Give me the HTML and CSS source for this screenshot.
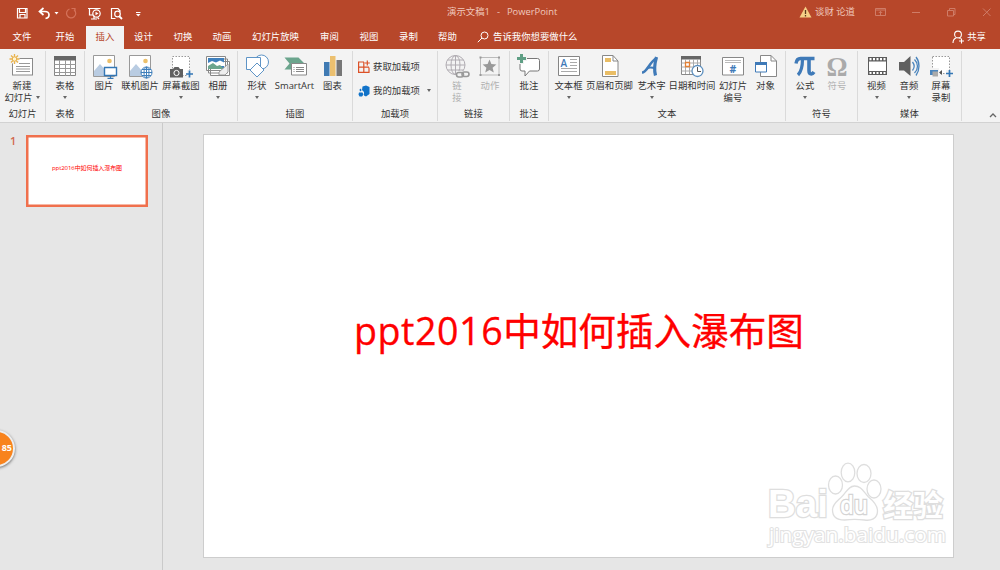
FILE: index.html
```html
<!DOCTYPE html>
<html lang="zh-CN">
<head>
<meta charset="utf-8">
<title>演示文稿1 - PowerPoint</title>
<link rel="stylesheet" href="styles.css">
</head>
<body>
<div class="app">
  <header class="titlebar">
    <svg class="quick" viewBox="0 0 150 24" fill="none" stroke="#fff" stroke-width="1.2">
      <path d="M17.500 7.500h9.500v9.500h-9.500zM19.500 7.500v4h6v-4M20 17v-3.500h5V17"/>
      <path d="M43.500 7l-4 3.500 4 3.500M40 10.500h5c5 0 5.500 6 .5 7" stroke-width="1.700"/>
      <path d="M54.500 11h4l-2 2.500z" fill="#fff" stroke="none"/>
      <path d="M74 8.700a4.600 4.600 0 1 1-4.500-.7M71.500 7.500h3.500v3.500" stroke="#d4725a"/>
      <path d="M88 7.500h12.500M89.500 7.500v6.500h3.500M94 14.500v3.500M91 18h6M97.500 16.500l1.500 1.500"/>
      <circle cx="96.500" cy="12.500" r="3.700"/><path d="M95.500 10.700l3 1.800-3 1.800z" fill="#fff" stroke="none"/>
      <path d="M120.500 10.500L118 7.500h-6.500v10h4"/><circle cx="117.500" cy="13" r="2.800"/><path d="M119 15l3 3" stroke-width="1.800"/>
      <path d="M136 11.500h4.500" stroke-width="1"/><path d="M136 13h4.500l-2.250 2.500z" fill="#fff" stroke="none"/>
    </svg>
    <div class="doc-title"><span>演示文稿1</span><span>-</span><span>PowerPoint</span></div>
    <div class="account">
      <svg width="13" height="12" viewBox="0 0 13 12"><path d="M6.500 .5L12.500 11.500H.5z" fill="#f5cf86"/><path d="M6.500 4v4M6.500 9v1.500" stroke="#5b3a1c" stroke-width="1.300"/></svg>
      <span>谈财 论道</span>
    </div>
    <svg class="window-controls" viewBox="0 0 130 24" fill="none" stroke="#cf7c67">
      <path d="M5.500 8.500h10v7h-10zM5.500 10h10M10.500 15v-3.500M8.800 13l1.700-1.700 1.700 1.700"/>
      <path d="M42 12.500h8M77.500 10.500h6v5.500h-6zM79.500 10.500v-2h5.500v6h-1.500M113 8.500l7.500 7.500M120.500 8.500l-7.500 7.500"/>
    </svg>
  </header>

  <nav class="tabs">
    <span class="tab w-file">文件</span><span class="tab w-home">开始</span><span class="tab active">插入</span><span class="tab">设计</span><span class="tab w-mid">切换</span><span class="tab w-narrow">动画</span><span class="tab w-show">幻灯片放映</span><span class="tab">审阅</span><span class="tab w-mid">视图</span><span class="tab">录制</span><span class="tab">帮助</span>
    <span class="tell-me">
      <svg width="12" height="12" viewBox="0 0 12 12" fill="none" stroke="#fff"><circle cx="7.500" cy="4.500" r="3.500"/><path d="M5 7L.8 11.200"/></svg>
      告诉我你想要做什么
    </span>
    <span class="share">
      <svg width="13" height="14" viewBox="0 0 13 14" fill="none" stroke="#fff" stroke-width="1.100"><circle cx="6" cy="4.500" r="3.400"/><path d="M1 13c0-3 1.500-4.500 3.500-5.200M7.500 7.800l1 1M9.500 8.500v5M7 11h5"/></svg>
      共享
    </span>
  </nav>

  <section class="ribbon">
    <div class="group g-slide">
      <div class="tools">
        <div class="tool"><svg class="icon" viewBox="0 0 28 26"><rect x="4.500" y="5.500" width="20" height="16.500" fill="#fff" stroke="#8a8a8a"/><path d="M11 10.500h11M8 13.500h14M8 16h14M8 18.500h14" stroke="#999"/><circle cx="6.500" cy="6" r="5" fill="#f3f3f3"/><path d="M6.500 1v10M1.500 6h10M3 2.500l7 7M10 2.500l-7 7" stroke="#e9b34d" stroke-width="1.300"/><circle cx="6.500" cy="6" r="2.200" fill="#fff3d0" stroke="#e9b34d"/></svg><span>新建</span><span class="more">幻灯片<i class="arrow"></i></span></div>
      </div>
      <div class="caption">幻灯片</div>
    </div>
    <div class="group g-table">
      <div class="tools">
        <div class="tool"><svg class="icon" viewBox="0 0 28 26"><path d="M3.500 3.500h21v19h-21z" fill="#fff" stroke="#858585"/><path d="M3 3h22v4.500H3z" fill="#666"/><path d="M3.500 11.500h21M3.500 15.500h21M3.500 19.500h21M8.500 7v16M14.500 7v16M19.500 7v16" stroke="#999" fill="none"/></svg><span>表格</span><i class="arrow below"></i></div>
      </div>
      <div class="caption">表格</div>
    </div>
    <div class="group g-image">
      <div class="tools">
        <div class="tool"><svg class="icon" viewBox="0 0 28 26"><path d="M3.500 2.500h21v21h-21z" fill="#fff" stroke="#999"/><path d="M4 18l6-7 7 8v4H4z" fill="#b9cce2"/><circle cx="19.500" cy="8" r="2.300" fill="#ecc06a"/><path d="M14.500 14.500h12v8h-12z" fill="#fff" stroke="#3477b5" stroke-width="1.400"/><path d="M20.500 23v2M17.500 25.300h6" stroke="#3477b5" stroke-width="1.200"/></svg><span>图片</span></div>
        <div class="tool"><svg class="icon" viewBox="0 0 28 26"><path d="M3.500 2.500h21v21h-21z" fill="#fff" stroke="#999"/><path d="M4 18l6-7 7 8v4H4z" fill="#b9cce2"/><circle cx="19.500" cy="8" r="2.300" fill="#ecc06a"/><g fill="#fff" stroke="#3f7fbb"><circle cx="20.500" cy="19.500" r="5.500"/><ellipse cx="20.500" cy="19.500" rx="2.500" ry="5.500"/><path d="M15 19.500h11M16 16.500h9M16 22.500h9M20.500 14v11"/></g></svg><span>联机图片</span></div>
        <div class="tool wide"><svg class="icon" viewBox="0 0 28 26"><path d="M5.500 3.500h17v19h-17z" fill="#fff" stroke="#999" stroke-dasharray="1.500 1.500"/><path d="M3 16h3l1.500-2h4l1.500 2h3v8.500H3z" fill="#606060"/><circle cx="9.500" cy="20" r="2.600" fill="#606060" stroke="#fff"/><path d="M20 17h7v7h-7z" fill="#f3f3f3"/><path d="M22.500 17.500v7M19 21h7" stroke="#3477b5" stroke-width="1.700"/></svg><span>屏幕截图</span><i class="arrow below"></i></div>
        <div class="tool album"><svg class="icon" viewBox="0 0 28 26"><g fill="#fff" stroke="#888"><path d="M6.500 8.500h19v14h-19zM4.500 6h19v14h-19zM2.500 3.500h19v14h-19z"/></g><path d="M4 5h16v11H4z" fill="#3f80bd"/><path d="M4 10l4-2 4 1.500 4-2 4 2V13H4z" fill="#fff"/><path d="M4 16v-3l5-3 4 3 3-1 4 4z" fill="#6ba58d"/><path d="M15 19l9-8v8l-3 3h-6z" fill="#eee" stroke="#888" stroke-width=".8"/></svg><span>相册</span><i class="arrow below"></i></div>
      </div>
      <div class="caption">图像</div>
    </div>
    <div class="group g-illus">
      <div class="tools">
        <div class="tool"><svg class="icon" viewBox="0 0 28 26" fill="#fff" stroke="#5e94c6"><circle cx="18.500" cy="9" r="7"/><path d="M3.500 4.500h14v12h-14z"/><path d="M14 10l7 7-7 7-7-7z"/></svg><span>形状</span><i class="arrow below"></i></div>
        <div class="tool smart"><svg class="icon" viewBox="0 0 28 26"><path d="M3.500 4.500h14l6 6-6 6h-14l5-6z" fill="#6ba58d"/><path d="M10.500 10.500h15v11.500h-15z" fill="#fff" stroke="#888"/><path d="M15 14.500h8M15 16.500h8M15 18.500h8M12.500 14.500h1M12.500 16.500h1M12.500 18.500h1" stroke="#888"/></svg><span>SmartArt</span></div>
        <div class="tool chart"><svg class="icon" viewBox="0 0 28 26"><path d="M5 9h5.500v14H5z" fill="#3f7ab3"/><path d="M11 3h5.500v20H11z" fill="#ecc06f"/><path d="M17.500 7H23v16h-5.500z" fill="#777"/></svg><span>图表</span></div>
      </div>
      <div class="caption">插图</div>
    </div>
    <div class="group g-addin">
      <div class="addins">
        <div class="addin"><svg width="12" height="13" viewBox="0 0 12 13" fill="none" stroke="#dc5127" stroke-width="1.200"><path d="M6 2H.6v10.400h10.400V7.500M.6 7.200h10.400M5.800 2v10.400M9.300 .5v5M6.800 3h5"/></svg>获取加载项</div>
        <div class="addin"><svg width="12" height="12" viewBox="0 0 12 12"><path d="M4.500 1.500L8 .5 11.500 2v7L8 11.500 6 10.500V7L4 5z" fill="#1173c9"/><path d="M1 7.500h3.500l1 2-1.500 2H1.500L.5 9.500zM1.500 4.500l1.500-1 .5 2-1.500 1z" fill="#1173c9"/></svg>我的加载项<i class="arrow"></i></div>
      </div>
      <div class="caption">加载项</div>
    </div>
    <div class="group g-link">
      <div class="tools">
        <div class="tool off"><svg class="icon" viewBox="0 0 28 26" fill="none" stroke="#b0acb2"><circle cx="12.500" cy="12" r="9.500"/><ellipse cx="12.500" cy="12" rx="4.500" ry="9.500"/><path d="M3 12h19M4.500 7h16M4.500 17h16M12.500 2.500v19"/><path d="M13 18h14v7H13z" fill="#f3f3f3" stroke="none"/><rect x="13.500" y="19.500" width="7" height="4.500" rx="2.250" stroke="#999" stroke-width="1.600"/><rect x="19" y="19" width="7" height="4.500" rx="2.250" stroke="#999" stroke-width="1.600"/></svg><span>链</span><span>接</span></div>
        <div class="tool action off"><svg class="icon" viewBox="0 0 28 26"><path d="M4.500 4.500h18.500v17.500H4.500z" fill="none" stroke="#bbb"/><path d="M3.500 3.500h2v2h-2zM22 3.500h2v2h-2zM3.500 21h2v2h-2zM22 21h2v2h-2z" fill="#999"/><path d="M13.500 6.500l1.900 4.600 5 .4-3.800 3.200 1.200 4.800-4.300-2.600-4.300 2.600 1.200-4.800-3.800-3.200 5-.4z" fill="#999"/></svg><span>动作</span></div>
      </div>
      <div class="caption">链接</div>
    </div>
    <div class="group g-note">
      <div class="tools">
        <div class="tool"><svg class="icon" viewBox="0 0 28 26"><path d="M6 5.500h16.500q2 0 2 2V16q0 2-2 2H14.500l-4.500 5V18H7q-2 0-2-2V5.500" fill="#fff" stroke="#777"/><path d="M6.500 0v11M1 5.500h11" stroke="#f3f3f3" stroke-width="5"/><path d="M6.500 1v9M2 5.500h9" stroke="#5f9f85" stroke-width="3"/></svg><span>批注</span></div>
      </div>
      <div class="caption">批注</div>
    </div>
    <div class="group g-text">
      <div class="tools">
        <div class="tool"><svg class="icon" viewBox="0 0 28 26"><path d="M3.500 3.500h21v19h-21z" fill="#fff" stroke="#858585"/><path d="M15 6.500h7M15 9.500h7M15 12.500h7M6 15.500h16M6 18.500h16" stroke="#aaa"/><text x="5.500" y="13.500" class="glyph" font-size="10" font-weight="600">A</text></svg><span>文本框</span><i class="arrow below"></i></div>
        <div class="tool header"><svg class="icon" viewBox="0 0 28 26"><path d="M6.500 2.500H17l5 5.500v15.500H6.500z" fill="#fff" stroke="#888"/><path d="M17 2.500V8h5" fill="none" stroke="#888"/><path d="M9 5h6v4H9zM9 18h11v4H9z" fill="#e9bd65"/></svg><span>页眉和页脚</span></div>
        <div class="tool art"><svg class="icon" viewBox="0 0 28 26" fill="none" stroke="#3f7ab8"><path d="M4 19.500c5 0 7-10 14.500-14.500" stroke-width="2.600"/><path d="M18.500 4c-2 7-2.500 13-1 18.500" stroke-width="3.200"/><path d="M9 15c3-.8 5-.8 8 .3" stroke-width="2"/></svg><span>艺术字</span><i class="arrow below"></i></div>
        <div class="tool date"><svg class="icon" viewBox="0 0 28 26"><path d="M3.500 3.500h19v18h-19z" fill="#fff" stroke="#888"/><path d="M3 3h20v3.500H3z" fill="#666"/><path d="M3.500 10h19M3.500 14h19M3.500 18h19M7.500 6v15M11.500 6v15M15.500 6v15M19.500 6v15" stroke="#aaa"/><path d="M7.500 9.500h4v4h-4z" fill="#fff" stroke="#e38135" stroke-width="1.300"/><circle cx="19.500" cy="18" r="5.500" fill="#fff" stroke="#5d90c0" stroke-width="1.300"/><path d="M19.500 14v4.500H23" fill="none" stroke="#555"/></svg><span>日期和时间</span></div>
        <div class="tool number"><svg class="icon" viewBox="0 0 28 26"><path d="M3.500 4.500h21v17.500h-21z" fill="#fff" stroke="#888"/><path d="M6 7.500h16M6 9.500h16" stroke="#bbb"/><text x="10.500" y="19.500" class="glyph" font-size="10.500" font-weight="bold">#</text></svg><span>幻灯片</span><span>编号</span></div>
        <div class="tool object"><svg class="icon" viewBox="0 0 28 26"><path d="M8.500 2.500H19l5.500 5.500v15.500h-16z" fill="#fff" stroke="#888"/><path d="M19 2.500V8h5.500" fill="none" stroke="#888"/><path d="M3.500 9.500h11v9.500h-11z" fill="#fff" stroke="#3f7ab8"/><path d="M3 9h12v3H3z" fill="#3f7ab8"/></svg><span>对象</span></div>
      </div>
      <div class="caption">文本</div>
    </div>
    <div class="group g-symbol">
      <div class="tools">
        <div class="tool"><svg class="icon" viewBox="0 0 28 26" fill="none" stroke="#3f7ab8"><path d="M5 10.500c.5-3.500 2-5 4.500-5H23.500" stroke-width="3.400"/><path d="M11.500 6c0 7-.5 12-4.500 16" stroke-width="3.200"/><path d="M18 6v11.500c0 4 3 4.500 5 1.500" stroke-width="3.600"/></svg><span>公式</span><i class="arrow below"></i></div>
        <div class="tool off"><svg class="icon" viewBox="0 0 28 26"><text x="3.500" y="22.500" class="omega" font-size="28" textLength="21" lengthAdjust="spacingAndGlyphs">Ω</text></svg><span>符号</span></div>
      </div>
      <div class="caption">符号</div>
    </div>
    <div class="group g-media">
      <div class="tools">
        <div class="tool"><svg class="icon" viewBox="0 0 28 26"><path d="M5 4h19v18H5z" fill="#5c5c5c"/><path d="M6 8.500h17v9.500H6z" fill="#fff"/><path d="M6.500 6.200h16.500M6.500 20h16.500" stroke="#fff" stroke-width="2.200" stroke-dasharray="2 1.500"/></svg><span>视频</span><i class="arrow below"></i></div>
        <div class="tool audio"><svg class="icon" viewBox="0 0 28 26"><path d="M4 9h5l6.500-6v20L9 17.500H4z" fill="#606060"/><path d="M17.500 9c2 2.500 2 6 0 8.500M19.500 6.500c4 4 4 9.500 0 13.500M21 4c4 5 4 13 0 18.500" fill="none" stroke="#4b85bd" stroke-width="1.300"/></svg><span>音频</span><i class="arrow below"></i></div>
        <div class="tool record"><svg class="icon" viewBox="0 0 28 26"><path d="M5.500 3.500h17v17h-17z" fill="#fff" stroke="#999" stroke-dasharray="1.500 1.500"/><path d="M2 15h10v9H2z" fill="#f3f3f3"/><path d="M3 17h8v5H3z" fill="#4b85bd"/><path d="M5.500 18.500H11v5H5.500z" fill="#aaa"/><path d="M12 19.500l3-2.500v5z" fill="#555"/><path d="M19 17h8v7h-8z" fill="#f3f3f3"/><path d="M22.500 17v7M19 20.500h7" stroke="#3477b5" stroke-width="1.700"/></svg><span>屏幕</span><span>录制</span></div>
      </div>
      <div class="caption">媒体</div>
    </div>
    <svg class="collapse" width="8" height="6" viewBox="0 0 8 6" fill="none" stroke="#666" stroke-width="1.300"><path d="M1 5l3-3 3 3"/></svg>
  </section>

  <main class="workspace">
    <aside class="thumbs">
      <span class="thumb-no">1</span>
      <div class="thumb">ppt2016中如何插入瀑布图</div>
    </aside>
    <div class="stage">
      <div class="slide">
        <h1 class="headline"><span class="latin">ppt2016</span>中如何插入瀑布图</h1>
        <svg class="watermark" width="190" height="96" viewBox="0 0 190 96">
          <g class="mark">
            <text x="4" y="60" font-size="39" font-weight="bold" textLength="60" lengthAdjust="spacingAndGlyphs">Bai</text>
            <ellipse cx="71.500" cy="28" rx="7" ry="9"/><ellipse cx="84" cy="15.500" rx="6.800" ry="9.300"/><ellipse cx="100" cy="16.500" rx="7" ry="9"/><ellipse cx="110" cy="32" rx="7" ry="9"/>
            <path d="M90.500 29c7 0 9 6 14 11 5 4 9 8 9 14 0 8-7 10-13 9-7-1-13-1-20 0-7 0-12-3-12-10 0-6 5-9 9-13 5-5 7-11 13-11z"/>
            <text x="76" y="57" font-size="25" textLength="28" lengthAdjust="spacingAndGlyphs" class="du">du</text>
            <text x="119" y="58.500" font-size="30" font-weight="700" textLength="60" class="cjk">经验</text>
            <text x="5" y="85" font-size="20" textLength="177" lengthAdjust="spacingAndGlyphs" class="site">jingyan.baidu.com</text>
          </g>
        </svg>
      </div>
    </div>
    <div class="badge">85</div>
  </main>
</div>
</body>
</html>
```
FILE: styles.css
```css
* { box-sizing: border-box; }
body { margin: 0; }
.app {
  width: 1000px; height: 570px; overflow: hidden;
  display: flex; flex-direction: column;
  font: 9.4px/12px "Open Sans", "Noto Sans CJK SC", sans-serif;
  color: #333; background: #e6e6e6; white-space: nowrap;
}
.titlebar {
  height: 26px; background: #b7472a; color: #f0c9be;
  display: grid; grid-template-columns: 447px 353px 70px 130px;
}
.quick { width: 150px; height: 24px; margin-top: 1px; }
.doc-title { display: flex; gap: 7px; padding-top: 6px; }
.account { display: flex; gap: 3px; padding-top: 6px; margin-left: -1px; }
.window-controls { width: 130px; height: 24px; }

.tabs { height: 23px; display: flex; background: #b7472a; color: #fff; }
.tab { width: 39px; line-height: 22px; text-align: center; flex: none; }
.w-file { width: 44px; }
.w-home { width: 42px; }
.w-mid { width: 40px; }
.w-narrow { width: 38px; }
.w-show { width: 69px; }
.active { width: 38px; background: #f3f3f3; color: #b7472a; }
.tell-me, .share { display: flex; align-items: center; gap: 4px; padding-bottom: 1px; }
.tell-me { margin-left: 10px; }
.share { margin-left: auto; padding-right: 14px; gap: 2px; }

.ribbon {
  height: 74px; display: flex; flex: none; position: relative;
  background: #f3f3f3; border-bottom: 1px solid #d2d2d2;
}
.group {
  flex: none; display: flex; flex-direction: column; justify-content: space-between;
  height: 70px; margin-top: 2px; padding: 2px 0 1px;
  border-right: 1px solid #dadada;
}
.g-slide { width: 46px; }
.g-table { width: 39px; }
.g-image { width: 153px; }
.g-illus { width: 115px; }
.g-addin { width: 85px; }
.g-link { width: 72px; }
.g-note { width: 39px; }
.g-text { width: 237px; }
.g-symbol { width: 72px; }
.g-media { width: 104px; }
.tools { display: flex; }
.tool {
  flex: none; width: 36px; display: flex; flex-direction: column; align-items: center;
  line-height: 11.5px;
}
.g-slide .tool { width: 44px; }
.g-table .tool { width: 38px; }
.g-image .tools { padding-left: 1px; }
.g-image .wide { width: 46px; }
.g-image .album { width: 28px; }
.g-illus .tools { padding-left: 2px; }
.g-illus .tool { width: 34px; }
.g-illus .smart { width: 41px; }
.g-illus .chart { width: 35px; }
.g-link .tools { padding-left: 2px; }
.g-link .tool { width: 34px; }
.g-link .action { width: 32px; }
.g-note .tool { width: 38px; }
.g-text .tools { padding-left: 4px; }
.g-text .tool { width: 31px; }
.g-text .header { width: 51px; }
.g-text .art { width: 33px; }
.g-text .date { width: 48px; }
.g-text .number { width: 34px; }
.g-symbol .tools, .g-media .tools { padding-left: 3px; }
.g-symbol .tool { width: 32px; }
.g-media .tool { width: 31px; }
.g-media .audio { width: 34px; }
.g-media .record { width: 30px; }
.icon { width: 28px; height: 26px; flex: none; margin-bottom: 1px; }
.glyph { fill: #3f7ab8; font-family: "Open Sans", sans-serif; }
.omega { fill: #aaa; font-family: "Liberation Serif", serif; font-weight: bold; }
.off { color: #b1b1b1; }
.caption { text-align: center; line-height: 12px; }
.arrow {
  display: inline-block; width: 0; height: 0;
  border: 2px solid transparent; border-top: 3px solid #666; border-bottom: 0;
}
.arrow.below { margin-top: 4px; }
.more { display: flex; align-items: center; gap: 3px; }
.addins { display: flex; flex-direction: column; gap: 11px; padding: 7px 0 0 5px; }
.addin { display: flex; align-items: center; gap: 3px; height: 13px; }
.addin .arrow { margin-left: 4px; }
.collapse { align-self: flex-end; margin: 0 0 4px 27px; }

.workspace { flex: 1; display: flex; position: relative; }
.thumbs {
  width: 163px; flex: none; display: flex; align-items: flex-start;
  padding: 12px 0 0 10px; border-right: 1px solid #cacaca;
}
.thumb-no { width: 16px; color: #d2694f; font-size: 11px; font-weight: 600; line-height: 11px; }
.thumb {
  width: 122px; height: 72px; border: 2.5px solid #f0704d; background: #fff;
  display: flex; justify-content: center; padding-top: 26px;
  box-shadow: inset 0 0 0 .5px #f0704d;
  color: #f00; font-size: 6px; line-height: 10px; letter-spacing: -.08px;
}
.stage { padding: 11px 0 0 40px; }
.slide {
  width: 751px; height: 424px; position: relative;
  background: #fff; border: 1px solid #cdcdcd; padding-top: 169px;
}
.headline {
  margin: 0; padding-left: 150px; color: #f00;
  font: 37.6px/54px "Open Sans", "Noto Sans CJK SC", sans-serif;
  -webkit-text-stroke: .3px #f00;
}
.latin { letter-spacing: .55px; }
.watermark { position: absolute; left: 560px; top: 322px; }
.mark { fill: #fff; stroke: #dedede; stroke-width: 1.3; font-family: "Liberation Sans", sans-serif; }
.mark text { paint-order: stroke; stroke-width: 2.6; }
.mark .cjk { font-family: "Noto Sans CJK SC", sans-serif; }
.mark .du { font-family: "Open Sans", sans-serif; font-weight: 600; stroke: #d4d4d4; }
.mark .site { font-family: "Open Sans", sans-serif; stroke: #e2e2e2; stroke-width: 2.2; }
.badge {
  position: absolute; left: -22px; top: 307px; width: 37px; height: 37px;
  border: 2px solid #eee; border-radius: 50%; background: #f8831d;
  box-shadow: 0 1px 3px #666; color: #fff; font-weight: bold;
  font-size: 9px; line-height: 32px; text-align: right; padding-right: 1px;
}
```
